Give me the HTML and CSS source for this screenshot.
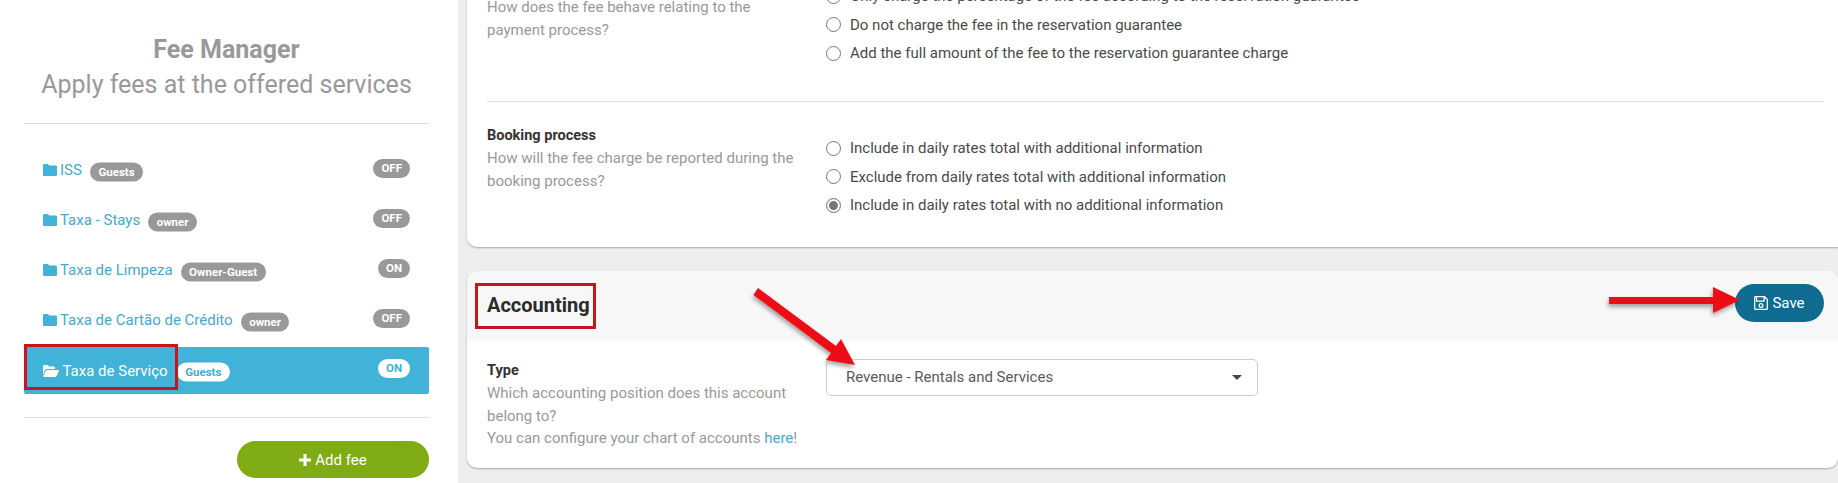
FILE: index.html
```html
<!DOCTYPE html>
<html lang="en">
<head>
    <meta charset="UTF-8">
    <title>Fee Manager</title>
    <link rel="stylesheet" href="styles.css">
</head>
<body>
<div class="layout">
    <aside class="sidebar">
        <div class="side-head">
            <h2>Fee Manager</h2>
            <p>Apply fees at the offered services</p>
        </div>
        <ul class="fee-list">
            <li class="fee-row">
                <svg class="folder" viewBox="0 0 14 12"><path d="M1.3 0h3.6l1.4 1.6h6.4c.7 0 1.3.6 1.3 1.3v7.8c0 .7-.6 1.3-1.3 1.3H1.3C.6 12 0 11.4 0 10.7V1.3C0 .6.6 0 1.3 0z"/></svg>
                <a class="fee-name">ISS</a><span class="tag">Guests</span>
                <span class="toggle">OFF</span>
            </li>
            <li class="fee-row">
                <svg class="folder" viewBox="0 0 14 12"><path d="M1.3 0h3.6l1.4 1.6h6.4c.7 0 1.3.6 1.3 1.3v7.8c0 .7-.6 1.3-1.3 1.3H1.3C.6 12 0 11.4 0 10.7V1.3C0 .6.6 0 1.3 0z"/></svg>
                <a class="fee-name">Taxa - Stays</a><span class="tag">owner</span>
                <span class="toggle">OFF</span>
            </li>
            <li class="fee-row">
                <svg class="folder" viewBox="0 0 14 12"><path d="M1.3 0h3.6l1.4 1.6h6.4c.7 0 1.3.6 1.3 1.3v7.8c0 .7-.6 1.3-1.3 1.3H1.3C.6 12 0 11.4 0 10.7V1.3C0 .6.6 0 1.3 0z"/></svg>
                <a class="fee-name">Taxa de Limpeza</a><span class="tag">Owner-Guest</span>
                <span class="toggle">ON</span>
            </li>
            <li class="fee-row">
                <svg class="folder" viewBox="0 0 14 12"><path d="M1.3 0h3.6l1.4 1.6h6.4c.7 0 1.3.6 1.3 1.3v7.8c0 .7-.6 1.3-1.3 1.3H1.3C.6 12 0 11.4 0 10.7V1.3C0 .6.6 0 1.3 0z"/></svg>
                <a class="fee-name">Taxa de Cartão de Crédito</a><span class="tag">owner</span>
                <span class="toggle">OFF</span>
            </li>
            <li class="fee-row active">
                <svg class="folder open" viewBox="0 0 16 12"><path d="M0 9.7V1.3C0 .6.6 0 1.3 0h3.5l1.4 1.6h4.6c.7 0 1.3.6 1.3 1.3V4H4c-.9 0-1.7.5-2.1 1.3L0 9.7zM4 5h11.2c.6 0 1 .6.7 1.1l-2.5 5.2c-.2.4-.6.7-1.1.7H1c-.6 0-1-.6-.7-1.1l2.5-5.2C3 5.3 3.5 5 4 5z"/></svg>
                <a class="fee-name">Taxa de Serviço</a><span class="tag">Guests</span>
                <span class="toggle">ON</span>
                <span class="mark mark-fee"></span>
            </li>
        </ul>
        <div class="side-foot">
            <button class="btn-add"><svg viewBox="0 0 12 12"><path d="M4.5 0h3v4.5H12v3H7.5V12h-3V7.5H0v-3h4.5z"/></svg>Add fee</button>
        </div>
    </aside>

    <main class="content">
        <section class="card card-top">
            <div class="form-row row-first">
                <div class="label-col">
                    <p class="hint">How does the fee behave relating to the payment process?</p>
                </div>
                <div class="radio-col">
                    <label class="radio"><i></i>Only charge the percentage of the fee according to the reservation guarantee</label>
                    <label class="radio"><i></i>Do not charge the fee in the reservation guarantee</label>
                    <label class="radio"><i></i>Add the full amount of the fee to the reservation guarantee charge</label>
                </div>
            </div>
            <div class="form-row row-booking">
                <div class="label-col">
                    <h4>Booking process</h4>
                    <p class="hint">How will the fee charge be reported during the booking process?</p>
                </div>
                <div class="radio-col">
                    <label class="radio"><i></i>Include in daily rates total with additional information</label>
                    <label class="radio"><i></i>Exclude from daily rates total with additional information</label>
                    <label class="radio"><i class="checked"></i>Include in daily rates total with no additional information</label>
                </div>
            </div>
        </section>

        <section class="card card-acc">
            <header class="card-head">
                <h3>Accounting<span class="mark mark-title"></span></h3>
                <button class="btn-save"><svg viewBox="0 0 14 14"><path fill-rule="evenodd" d="M1.5 0h9.3L14 3.2v9.3c0 .8-.7 1.5-1.5 1.5h-11C.7 14 0 13.3 0 12.5v-11C0 .7.7 0 1.5 0zM3.2 1.3v3.2h6.3V1.3H3.2zm-1.7 0c-.1 0-.2.1-.2.2v11c0 .1.1.2.2.2h11c.1 0 .2-.1.2-.2V3.8l-1.900-1.900v3c0 .5-.4.9-.9.9H2.800c-.5 0-.9-.4-.9-.9V1.300h-.4zM7 7a2.500 2.500 0 1 1 0 5 2.500 2.500 0 0 1 0-5zm0 1.300a1.200 1.200 0 1 0 0 2.400 1.200 1.200 0 0 0 0-2.400z"/></svg>Save</button>
            </header>
            <div class="form-row row-type">
                <div class="label-col">
                    <h4>Type</h4>
                    <p class="hint">Which accounting position does this account belong to?<br>You can configure your chart of accounts <a>here</a>!</p>
                </div>
                <div class="select-col">
                    <div class="select">Revenue - Rentals and Services<span class="caret"></span></div>
                </div>
            </div>
        </section>
    </main>
</div>

<svg class="arrows" viewBox="0 0 1838 483">
    <defs>
        <filter id="arrow-shadow" x="-20%" y="-20%" width="140%" height="140%">
            <feDropShadow dx="-1" dy="3" stdDeviation="2" flood-color="#000" flood-opacity="0.35"/>
        </filter>
    </defs>
    <path filter="url(#arrow-shadow)" fill="#ec0f17" d="M758 288L836 346L841 339L855 365L826 360L831 353L753.5 295z"/>
    <path filter="url(#arrow-shadow)" fill="#ec0f17" d="M1609 297h104v-10l27 13-27 13v-9h-104z"/>
</svg>
</body>
</html>
```

FILE: styles.css
```css
* {
    box-sizing: border-box;
}

body {
    margin: 0;
    height: 483px;
    overflow: hidden;
    background: #eeeeee;
    font-family: Roboto, "Liberation Sans", sans-serif;
    color: #333;
}

h2, h3, h4, p, ul {
    margin: 0;
    padding: 0;
}

.layout {
    display: flex;
    height: 483px;
}

/* left column */
.sidebar {
    width: 458px;
    flex-shrink: 0;
    padding: 34px 29px 0 24px;
    background: #fff;
}

.side-head {
    height: 90px;
    border-bottom: 1px solid #dddddd;
    text-align: center;
    color: #999999;
}

.side-head h2 {
    font-size: 25px;
    line-height: 32px;
    font-weight: 700;
}

.side-head p {
    font-size: 25px;
    line-height: 37px;
}

.fee-list {
    list-style: none;
    padding-top: 21px;
    height: 294px;
    border-bottom: 1px solid #dddddd;
}

.fee-row {
    position: relative;
    display: flex;
    align-items: center;
    height: 50px;
    padding: 0 19px;
    font-size: 15px;
    color: #46a9cd;
}

.fee-row.active {
    height: 47px;
    margin-top: 2px;
    border-radius: 2px;
    background: #41b2d8;
    color: #fff;
}

.folder {
    width: 14px;
    height: 12px;
    margin-right: 3px;
    fill: #41b2d8;
}

.folder.open {
    width: 16px;
    margin-right: 3.5px;
    fill: #fff;
}

.tag {
    margin-left: 8px;
    padding: 0 8.5px;
    border-radius: 10px;
    background: #999999;
    color: #fff;
    font-size: 11.5px;
    font-weight: 700;
    line-height: 19px;
    transform: translateY(1.5px);
}

.active .tag {
    margin-left: 9px;
    background: #fff;
    color: #46a9cd;
}

.toggle {
    margin-left: auto;
    padding: 0 8px;
    border-radius: 10px;
    background: #999999;
    color: #fff;
    font-size: 11.5px;
    font-weight: 700;
    line-height: 19px;
    transform: translateY(-2px);
}

.active .toggle {
    background: #fff;
    color: #41b2d8;
}

.side-foot {
    display: flex;
    justify-content: flex-end;
    padding-top: 23px;
}

.btn-add {
    display: flex;
    align-items: center;
    justify-content: center;
    width: 192px;
    height: 37px;
    border: 0;
    border-radius: 19px;
    background: #7fab14;
    color: #fff;
    font-family: inherit;
    font-size: 15px;
}

.btn-add svg {
    width: 12px;
    height: 12px;
    margin-right: 4px;
    fill: #fff;
}

/* red boxes drawn over the screenshot */
.mark {
    position: absolute;
    border: 3px solid #c8141c;
    pointer-events: none;
}

.mark-fee {
    left: 0;
    top: -3px;
    width: 154px;
    height: 46px;
}

.mark-title {
    left: -12px;
    top: -12px;
    width: 121px;
    height: 46px;
}

/* right column */
.content {
    flex: 1;
    min-width: 0;
    padding-left: 9px;
}

.card {
    background: #fff;
    border-radius: 10px;
    box-shadow: 0 1px 2px rgba(0, 0, 0, 0.3);
}

.card-top {
    height: 248px;
    margin-top: -1px;
    padding: 0 14px 0 20px;
    border-radius: 0 0 0 10px;
}

.card-acc {
    height: 197px;
    margin-top: 24px;
}

.form-row {
    display: flex;
}

.row-first {
    height: 103px;
    border-bottom: 1px solid #dddddd;
}

.row-booking {
    padding-top: 23px;
}

.label-col {
    width: 339px;
    flex-shrink: 0;
    padding-right: 25px;
    font-size: 15px;
    line-height: 22.5px;
}

.label-col h4 {
    font-size: 14.5px;
    line-height: 22px;
    font-weight: 700;
    color: #333;
}

.hint {
    color: #999999;
}

.hint a {
    color: #46a9cd;
}

.row-first .hint {
    margin-top: -3px;
}

.radio-col {
    display: flex;
    flex-direction: column;
}

.row-first .radio-col {
    margin-top: -17px;
}

.row-booking .radio-col {
    padding-top: 9px;
}

.radio {
    display: flex;
    align-items: center;
    height: 28.5px;
    font-size: 15px;
    color: #4a4a4a;
}

.radio i {
    width: 15px;
    height: 15px;
    margin-right: 9px;
    border: 1px solid #777;
    border-radius: 50%;
    background: #fff;
}

.radio i.checked {
    box-shadow: inset 0 0 0 2px #fff, inset 0 0 0 7px #777;
}

.card-head {
    display: flex;
    align-items: center;
    justify-content: space-between;
    height: 69px;
    padding: 0 14px 0 20px;
    border-radius: 10px 10px 0 0;
    background: #f7f7f7;
}

.card-head h3 {
    position: relative;
    margin-bottom: 2px;
    font-size: 20px;
    line-height: 20px;
    font-weight: 700;
    color: #2b2b2b;
}

.btn-save {
    display: flex;
    align-items: center;
    justify-content: center;
    width: 89px;
    height: 38px;
    margin-bottom: 6px;
    border: 0;
    border-radius: 19px;
    background: #106b91;
    color: #fff;
    font-family: inherit;
    font-size: 15px;
}

.btn-save svg {
    width: 14px;
    height: 14px;
    margin-right: 4px;
    fill: #fff;
}

.row-type {
    padding: 20px 20px 0;
}

.select-col {
    width: 432px;
    margin-top: -1px;
}

.select {
    position: relative;
    height: 37px;
    padding-left: 19px;
    border: 1px solid #cccccc;
    border-radius: 5px;
    background: #fff;
    font-size: 15px;
    line-height: 34px;
    color: #5a5a5a;
}

.caret {
    position: absolute;
    right: 15px;
    top: 15px;
    border: 5px solid transparent;
    border-top-color: #444;
    border-bottom: 0;
}

.arrows {
    position: absolute;
    left: 0;
    top: 0;
    width: 1838px;
    height: 483px;
    pointer-events: none;
}
```
